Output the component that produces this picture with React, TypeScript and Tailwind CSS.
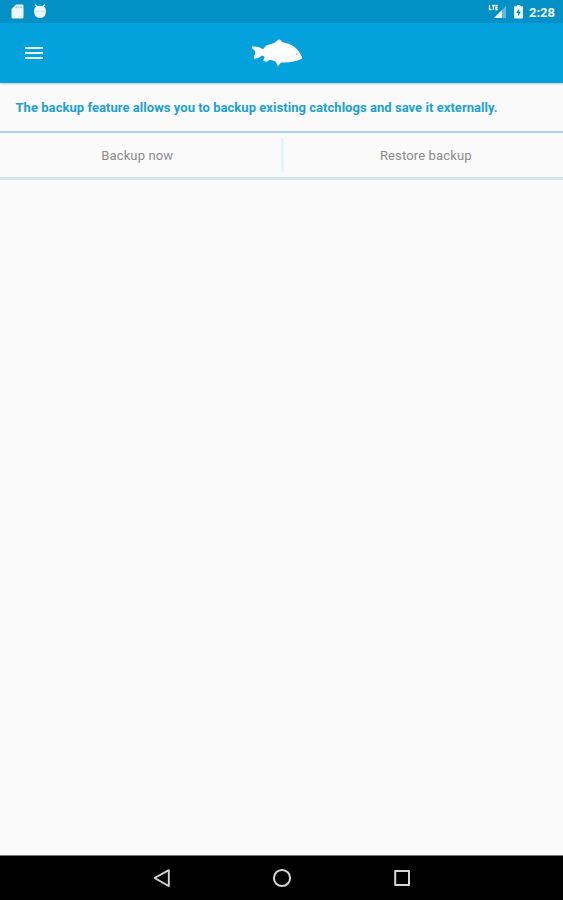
import type { ReactNode } from "react";

function StatusBar() {
  return (
    <div className="flex h-[23px] shrink-0 items-center justify-between bg-[#0191c6] pr-2 pl-[11px] text-[#eef7fb]">
      <div className="flex items-center gap-[9px]">
        {/* SD card */}
        <svg width="13" height="15" viewBox="0 0 13 15" fill="currentColor">
          <path d="M5 0.5h6.3c.7 0 1.2.5 1.2 1.2v11.6c0 .7-.5 1.2-1.2 1.2H1.7c-.7 0-1.2-.5-1.2-1.2V5z" />
          <path d="M5.6 2v2.2M7.8 2v2.2M10 2v2.2" stroke="#7fc4e2" strokeWidth="1" />
        </svg>
        {/* Debug head */}
        <svg width="14" height="15" viewBox="0 0 14 15" fill="currentColor">
          <path d="M2.2.6l2 2.2M11.8.6l-2 2.2" stroke="currentColor" strokeWidth="1.4" />
          <path d="M3 2.5Q7 .9 11 2.5q1.6 1.4 1.8 3.2v3a5.8 5.3 0 0 1-11.6 0v-3Q1.4 3.9 3 2.5z" />
          <path d="M3.6 7.4h2.3M8.1 7.4h2.3" stroke="#a9d9ed" strokeWidth="1" />
        </svg>
      </div>
      <div className="flex items-center">
        <svg className="mr-[7px]" width="19" height="15" viewBox="0 0 19 15" fill="currentColor">
          <path d="M18 2v12H6z" opacity=".4" />
          <path d="M14 6V14H6z" />
          <path d="M1.5 1v4.5h2M4 1.5h2.8M5.4 1.5v4.5M9.8 1.5H8v4h1.8M8 3.5h1.6" fill="none" stroke="currentColor" strokeWidth="1.3" />
        </svg>
        <svg className="mr-[6px]" width="9" height="14" viewBox="0 0 9 14" fill="currentColor">
          <path d="M2.8 0h3.4v1.3h2c.4 0 .8.3.8.8v10.6c0 .5-.4.8-.8.8H.8c-.5 0-.8-.3-.8-.8V2.1c0-.5.3-.8.8-.8h2z" />
          <path d="M5.1 3.4L2.3 8.1h1.8v3.3l2.7-4.7H5.1z" fill="#0191c6" />
        </svg>
        <span className="w-[26px] pt-px text-[13px] leading-none font-bold whitespace-nowrap">2:28</span>
      </div>
    </div>
  );
}

function FishLogo() {
  return (
    <svg width="52" height="28" viewBox="0 0 52 28" fill="#fff">
      <path d="M.7 7.8C3 7.2 5 8 7.5 8.3C9.5 8.5 10.8 10 12.2 10.1C13.2 9 14.2 7.4 15.6 6.2L19.4 5.2C21 4.4 22.5 4.2 24 3.4L27.8.2L29.4.9L31.2 3C35 3.9 38.6 5 41.6 6.7C45.2 8.9 47.8 11.6 49.2 14.8L51.1 18C51.2 19.6 50 20.4 48 20.9C44.5 22 40.5 22.8 36.8 23.2C34 23.6 31 23.2 29.6 23.8L28 26.6L26.3 26.4C25.8 25 25.5 23.9 24.6 22.4C22.5 22 20.6 21.3 18.8 20.8L15.8 22.7L12.3 22L13.5 18C12.6 16.9 11.4 16.7 10.2 17C8 18.8 5.8 20 3.2 19.8C2.6 18.2 3.6 16.2 4.4 14.2L3.8 11.6C2.4 10.8.9 9.8.7 7.8z" />
      <circle cx="45.8" cy="15" r=".9" fill="#8bcbe9" />
    </svg>
  );
}

function AppBar() {
  return (
    <header className="grid h-[60px] shrink-0 grid-cols-3 items-center bg-[#03a2dc] shadow-[0_1px_2px_rgba(0,0,0,0.22)]">
      <button aria-label="Menu" className="ml-[25px] flex w-[18px] flex-col gap-[3px]">
        <span className="h-[2px] w-full bg-[#e4f7ff]" />
        <span className="h-[2px] w-full bg-[#e4f7ff]" />
        <span className="h-[2px] w-full bg-[#e4f7ff]" />
      </button>
      <div className="flex justify-center pr-[8px]">
        <FishLogo />
      </div>
    </header>
  );
}

function ActionButton({ className, children }: { className: string; children: ReactNode }) {
  return (
    <button className={`flex-1 pt-px text-center text-[13px] tracking-[0.14px] text-[#8b8b8b] ${className}`}>{children}</button>
  );
}

function NavBar() {
  return (
    <nav className="flex h-[45px] shrink-0 items-center justify-center gap-[100px] border-t border-[#777] bg-black text-[#d6d6d6]">
      <svg width="20" height="20" viewBox="0 0 20 20" fill="none" stroke="currentColor" strokeWidth="1.9" strokeLinejoin="round">
        <path d="M16.8 2.2v15.8L2.6 10z" />
      </svg>
      <svg width="20" height="20" viewBox="0 0 20 20" fill="none" stroke="currentColor" strokeWidth="2">
        <circle cx="10" cy="10" r="8.1" />
      </svg>
      <svg width="20" height="20" viewBox="0 0 20 20" fill="none" stroke="currentColor" strokeWidth="2" strokeLinejoin="round">
        <path d="M3.2 3h13.8v14H3.2z" />
      </svg>
    </nav>
  );
}

export default function App() {
  return (
    <div className="flex h-[900px] w-[563px] flex-col overflow-hidden bg-[#fafafa] font-[Roboto,sans-serif]">
      <StatusBar />
      <AppBar />
      <main className="flex-1">
        <p className="flex h-[48px] items-center pt-px pl-[15.5px] text-[13px] font-bold tracking-[0.045px] whitespace-nowrap text-[#1b9fd9]">
          The backup feature allows you to backup existing catchlogs and save it externally.
        </p>
        <div className="flex h-[49px] items-center border-t-2 border-b-3 border-t-[#add3ea] border-b-[#d3e3f1]">
          <ActionButton className="pr-[6px]">Backup now</ActionButton>
          <span className="h-[34px] w-[3px] bg-[#e8f4fb]" />
          <ActionButton className="pl-[5px]">Restore backup</ActionButton>
        </div>
      </main>
      <NavBar />
    </div>
  );
}
